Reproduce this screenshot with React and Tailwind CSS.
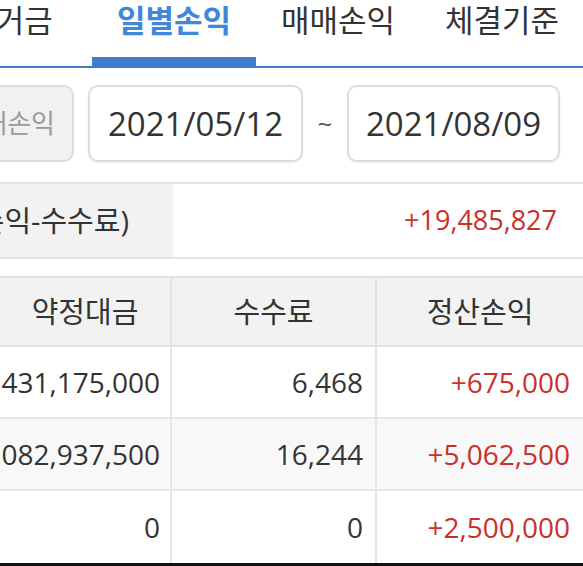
const tabs = [
  { label: '증거금' },
  { label: '일별손익', active: true },
  { label: '매매손익' },
  { label: '체결기준' },
];

const rows = [
  { amount: '1,431,175,000', fee: '6,468', pnl: '+675,000', bg: 'bg-white' },
  { amount: '1,082,937,500', fee: '16,244', pnl: '+5,062,500', bg: 'bg-[#f8f8f8]' },
  { amount: '0', fee: '0', pnl: '+2,500,000', bg: 'bg-white' },
];

const App = () => {
  return (
    <div
      className="w-[583px] h-[566px] overflow-hidden bg-white flex flex-col text-[#333]"
      style={{ fontFamily: '"Open Sans", "Noto Sans CJK KR", sans-serif' }}
    >
      {/* tabs */}
      <div className="flex border-b-2 border-[#3d7dcc]">
        <div className="flex ml-[-72px] shrink-0">
          {tabs.map((tab) => (
            <div key={tab.label} className="w-[164px] flex flex-col items-center shrink-0">
              <div
                className={
                  tab.active
                    ? 'h-[57px] leading-[40px] text-[31px] font-bold text-[#3f88d8]'
                    : 'h-[57px] leading-[40px] text-[31px] text-[#333]'
                }
              >
                {tab.label}
              </div>
              <div className={tab.active ? 'h-[9px] w-full bg-[#3d7dcc]' : 'h-[9px] w-full'} />
            </div>
          ))}
        </div>
      </div>

      {/* date range */}
      <div className="flex items-center mt-[17px] h-[77px]">
        <div className="ml-[-72px] w-[146px] h-full shrink-0 rounded-[10px] border-2 border-[#dedede] bg-[#f1f1f1] flex items-center justify-end pr-[17px] text-[26px] text-[#9a9a9a]">
          매매손익
        </div>
        <div className="ml-[14px] w-[215px] h-full shrink-0 rounded-[10px] border-2 border-[#dcdcdc] shadow-[0_1px_2px_rgba(0,0,0,0.08)] flex items-center justify-center text-[33px] text-[#333]">
          2021/05/12
        </div>
        <div className="w-[44px] text-center text-[26px] text-[#555] shrink-0">~</div>
        <div className="w-[213px] h-full shrink-0 rounded-[10px] border-2 border-[#dcdcdc] shadow-[0_1px_2px_rgba(0,0,0,0.08)] flex items-center justify-center text-[33px] text-[#333]">
          2021/08/09
        </div>
      </div>

      {/* summary */}
      <div className="flex mt-[20px] h-[77px] border-y-2 border-[#e4e4e4]">
        <div className="w-[173px] shrink-0 bg-[#f2f2f2] flex items-center justify-end pr-[44px] overflow-hidden whitespace-nowrap text-[29px] text-[#333]">
          실현손익(매매손익-수수료)
        </div>
        <div className="flex-1 flex items-center justify-end pr-[26px] text-[27px] text-[#c9302c]">
          +19,485,827
        </div>
      </div>

      {/* table */}
      <div className="mt-[17px] flex flex-col border-t-2 border-[#e2e2e2]">
        <div className="flex h-[69px] bg-[#f2f2f2] border-b-2 border-[#e2e2e2] text-[29px] text-[#333]">
          <div className="w-[172px] shrink-0 flex items-center justify-center border-r-2 border-[#e2e2e2]">약정대금</div>
          <div className="w-[205px] shrink-0 flex items-center justify-center border-r-2 border-[#e2e2e2]">수수료</div>
          <div className="flex-1 flex items-center justify-center">정산손익</div>
        </div>
        {rows.map((row, i) => (
          <div
            key={i}
            className={`flex h-[72px] ${row.bg} ${i < rows.length - 1 ? 'border-b-2 border-[#e6e6e6]' : ''} text-[28px]`}
          >
            <div className="w-[172px] shrink-0 flex items-center justify-end pr-[10px] whitespace-nowrap border-r-2 border-[#e6e6e6] text-[#333]">
              {row.amount}
            </div>
            <div className="w-[205px] shrink-0 flex items-center justify-end pr-[12px] border-r-2 border-[#e6e6e6] text-[#333]">
              {row.fee}
            </div>
            <div className="flex-1 flex items-center justify-end pr-[13px] text-[#c9302c]">{row.pnl}</div>
          </div>
        ))}
      </div>
      <div className="flex-1" />
      <div className="h-[3px] bg-[#111] shrink-0" />
    </div>
  );
};

export default App;
